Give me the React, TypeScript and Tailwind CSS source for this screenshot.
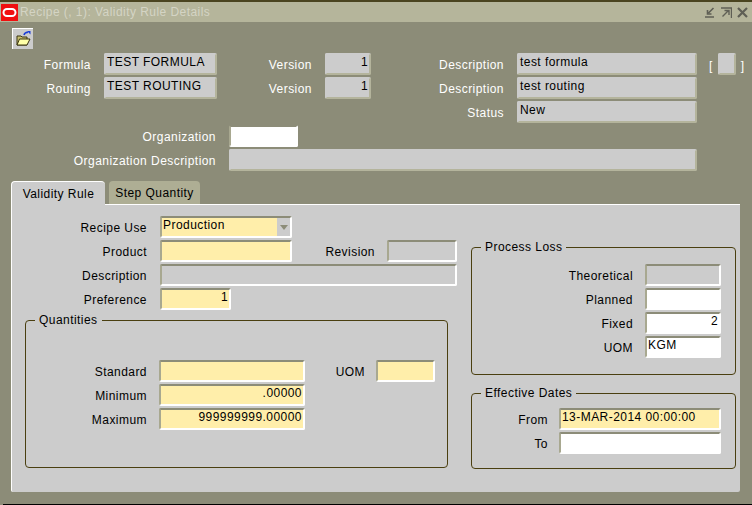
import React from "react";

const labelFont = "font-['Liberation_Sans',Arial,sans-serif] text-[12px] tracking-[0.45px]";

function Label({ children, className = "", light }: { children: React.ReactNode; className?: string; light?: boolean }) {
  return (
    <span className={`shrink-0 pt-[3px] text-right leading-[19px] ${light ? "text-white" : "text-black"} ${className}`}>
      {children}
    </span>
  );
}

function Field({
  value,
  right,
  tone = "gray",
  className = "",
}: {
  value?: string;
  right?: boolean;
  tone?: "gray" | "yellow" | "white" | "flat";
  className?: string;
}) {
  const bg =
    tone === "yellow" ? "bg-[#ffeeaa]" : tone === "white" ? "bg-white" : "bg-[#cccccc]";
  const border =
    tone === "gray"
      ? "border-2 border-t-[#cccccc] border-l-[#cccccc] border-r-[#b4b49c] border-b-[#b4b49c]"
      : "border-2 border-t-[#8c8c78] border-l-[#a8a890] border-r-white border-b-white";
  return (
    <div
      className={`h-[22px] shrink-0 overflow-hidden rounded-[2px] px-[1px] leading-[15px] text-black ${bg} ${border} ${right ? "text-right" : ""} ${className}`}
    >
      {value}
    </div>
  );
}

function Group({ title, className = "", children }: { title: string; className?: string; children: React.ReactNode }) {
  return (
    <div className={`relative rounded-[4px] border border-[#4a3f10] ${className}`}>
      <span className="absolute top-[-9px] left-[9px] bg-[#cccccc] px-[4px] leading-[16px] text-black">{title}</span>
      {children}
    </div>
  );
}

function OracleLogo() {
  return (
    <svg width="17" height="17" viewBox="0 0 17 17" className="shrink-0">
      <rect width="17" height="17" fill="#f01010" />
      <rect x="2.5" y="5" width="12" height="7" rx="3.5" fill="none" stroke="#fff" strokeWidth="2" />
    </svg>
  );
}

function WindowIcons() {
  return (
    <div className="flex items-center gap-[5px]">
      <svg width="12" height="11" viewBox="0 0 12 11">
        <path d="M1 10h9M9.5 1 4.5 6M3.5 3v4h4" fill="none" stroke="#5f5f55" strokeWidth="1.6" />
      </svg>
      <svg width="11" height="11" viewBox="0 0 11 11">
        <path d="M0 1h10.5v10M1.5 9.5 7.5 3.5M3.5 3.5h4.5v4.5" fill="none" stroke="#5f5f55" strokeWidth="1.4" />
      </svg>
      <svg width="11" height="11" viewBox="0 0 11 11">
        <path d="M1 1l9 9M10 1l-9 9" fill="none" stroke="#5f5f55" strokeWidth="2.2" />
      </svg>
    </div>
  );
}

function FolderIcon() {
  return (
    <svg width="15" height="16" viewBox="0 0 15 16">
      <path d="M1 5h4l1 1h5v8H1z" fill="#c8c070" stroke="#3a3410" />
      <path d="M1 14l2.5-6H14l-3 6z" fill="#ffffa8" stroke="#3a3410" />
      <path d="M8 4c.5-2 2-3 4-2.5" fill="none" stroke="#1c3fd8" strokeWidth="1.6" />
      <path d="M11 0h3.5v3.500z" fill="#1c3fd8" />
    </svg>
  );
}

export default function App() {
  return (
    <div className={`flex h-[505px] w-[752px] flex-col overflow-hidden bg-[#8c8c78] ${labelFont}`}>
      <div className="h-[2px] shrink-0 bg-[#4a4420]" />
      <div className="flex h-[20px] shrink-0 items-center bg-[#b5b59b] pr-[4px] pl-[1px]">
        <OracleLogo />
        <span className="ml-[2px] flex-1 text-[#d4d4c4]">Recipe (, 1): Validity Rule Details</span>
        <WindowIcons />
      </div>

      <div className="ml-[12px] mt-[6px] flex h-[21px] w-[21px] shrink-0 items-center justify-center border-t border-l border-t-white border-l-white bg-[#cccccc]">
        <FolderIcon />
      </div>

      <div className="mt-[4px] flex h-[24px] shrink-0">
        <Label light className="w-[91px]">Formula</Label>
        <Field value="TEST FORMULA" className="ml-[13px] w-[113px]" />
        <Label light className="w-[95px]">Version</Label>
        <Field value="1" right className="ml-[13px] w-[46px]" />
        <Label light className="w-[133px]">Description</Label>
        <Field value="test formula" className="ml-[13px] w-[180px]" />
        <span className="ml-[12px] pt-[4px] leading-[19px] text-white">[</span>
        <Field className="ml-[5px] w-[18px]" />
        <span className="ml-[5px] pt-[4px] leading-[19px] text-white">]</span>
      </div>
      <div className="flex h-[24px] shrink-0">
        <Label light className="w-[91px]">Routing</Label>
        <Field value="TEST ROUTING" className="ml-[13px] w-[113px]" />
        <Label light className="w-[95px]">Version</Label>
        <Field value="1" right className="ml-[13px] w-[46px]" />
        <Label light className="w-[133px]">Description</Label>
        <Field value="test routing" className="ml-[13px] w-[180px]" />
      </div>
      <div className="flex h-[24px] shrink-0">
        <Label light className="w-[504px]">Status</Label>
        <Field value="New" className="ml-[13px] w-[180px]" />
      </div>
      <div className="flex h-[24px] shrink-0">
        <Label light className="w-[216px]">Organization</Label>
        <Field tone="white" className="ml-[13px] w-[69px]" />
      </div>
      <div className="flex h-[24px] shrink-0">
        <Label light className="w-[216px]">Organization Description</Label>
        <Field className="ml-[13px] w-[468px]" />
      </div>

      <div className="ml-[11px] mt-[7px] flex h-[24px] shrink-0 items-end">
        <div className="relative z-10 -mb-[1px] flex h-[24px] w-[94px] items-center justify-center rounded-t-[4px] border-t border-l border-white bg-[#cccccc] text-black">
          Validity Rule
        </div>
        <div className="ml-[4px] flex h-[23px] w-[91px] items-center justify-center rounded-t-[4px] bg-[#aeae94] text-black">
          Step Quantity
        </div>
      </div>

      <div className="ml-[11px] flex h-[288px] w-[729px] shrink-0 gap-[23px] rounded-b-[2px] border-t border-l border-white bg-[#cccccc] pl-[13px]">
        <div className="flex w-[423px] shrink-0 flex-col pt-[11px]">
          <div className="flex h-[24px]">
            <Label className="w-[122px]">Recipe Use</Label>
            <div className="relative ml-[13px] h-[22px] w-[132px]">
              <Field tone="yellow" value="Production" className="w-full" />
              <span className="absolute top-[2px] right-[2px] flex h-[18px] w-[13px] items-center justify-center bg-[#cccccc]">
                <span className="h-0 w-0 border-x-[4px] border-t-[5px] border-x-transparent border-t-[#8c8c78]" />
              </span>
            </div>
          </div>
          <div className="flex h-[24px]">
            <Label className="w-[122px]">Product</Label>
            <Field tone="yellow" className="ml-[13px] w-[132px]" />
            <Label className="w-[83px]">Revision</Label>
            <Field tone="flat" className="ml-[12px] w-[70px]" />
          </div>
          <div className="flex h-[24px]">
            <Label className="w-[122px]">Description</Label>
            <Field tone="flat" className="ml-[13px] w-[297px]" />
          </div>
          <div className="flex h-[24px]">
            <Label className="w-[122px]">Preference</Label>
            <Field tone="yellow" value="1" right className="ml-[13px] w-[71px]" />
          </div>
          <Group title="Quantities" className="mt-[8px] h-[148px] w-[423px] pt-[39px]">
            <div className="flex h-[24px]">
              <Label className="w-[121px]">Standard</Label>
              <Field tone="yellow" className="ml-[12px] w-[146px]" />
              <Label className="w-[60px]">UOM</Label>
              <Field tone="yellow" className="ml-[11px] w-[59px]" />
            </div>
            <div className="flex h-[24px]">
              <Label className="w-[121px]">Minimum</Label>
              <Field tone="yellow" value=".00000" right className="ml-[12px] w-[146px]" />
            </div>
            <div className="flex h-[24px]">
              <Label className="w-[121px]">Maximum</Label>
              <Field tone="yellow" value="999999999.00000" right className="ml-[12px] w-[146px]" />
            </div>
          </Group>
        </div>

        <div className="flex w-[265px] shrink-0 flex-col pt-[42px]">
          <Group title="Process Loss" className="h-[128px] w-[265px] pt-[16px]">
            <div className="flex h-[24px]">
              <Label className="w-[161px]">Theoretical</Label>
              <Field tone="flat" className="ml-[12px] w-[76px]" />
            </div>
            <div className="flex h-[24px]">
              <Label className="w-[161px]">Planned</Label>
              <Field tone="white" className="ml-[12px] w-[76px]" />
            </div>
            <div className="flex h-[24px]">
              <Label className="w-[161px]">Fixed</Label>
              <Field tone="white" value="2" right className="ml-[12px] w-[76px]" />
            </div>
            <div className="flex h-[24px]">
              <Label className="w-[161px]">UOM</Label>
              <Field tone="white" value="KGM" className="ml-[12px] w-[76px]" />
            </div>
          </Group>
          <Group title="Effective Dates" className="mt-[18px] h-[76px] w-[265px] pt-[14px]">
            <div className="flex h-[24px]">
              <Label className="w-[76px]">From</Label>
              <Field tone="yellow" value="13-MAR-2014 00:00:00" className="ml-[11px] w-[162px]" />
            </div>
            <div className="flex h-[24px]">
              <Label className="w-[76px]">To</Label>
              <Field tone="white" className="ml-[11px] w-[162px]" />
            </div>
          </Group>
        </div>
      </div>

      <div className="flex-1" />
      <div className="ml-[3px] h-[1px] shrink-0 bg-black" />
    </div>
  );
}
